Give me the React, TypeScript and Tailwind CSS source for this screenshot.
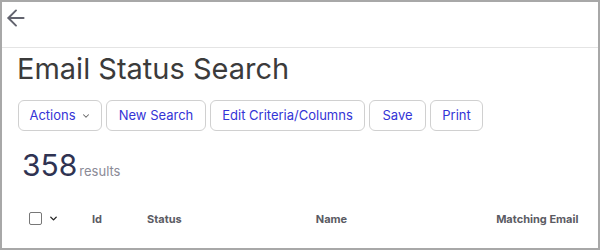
import { ArrowLeft, ChevronDown } from "lucide-react";

const buttons = [
  { label: "New Search", w: "w-[100px]" },
  { label: "Edit Criteria/Columns", w: "w-[155px]" },
  { label: "Save", w: "w-[57px]" },
  { label: "Print", w: "w-[53px]" },
];

export default function App() {
  return (
    <div className="w-[600px] h-[250px] border-2 border-[#a8a8a8] bg-white overflow-hidden font-['Inter',sans-serif]">
      {/* top bar */}
      <div className="h-[46px] border-b border-[#e4e4e4] flex items-start pl-[1px] pt-[3px]">
        <ArrowLeft className="w-[26px] h-[26px] text-[#62636e]" strokeWidth={1.8} />
      </div>

      <div className="pl-[15px] pr-4">
        <h1 className="text-[29px] leading-none text-[#3b3b3b] mt-[6px]">Email Status Search</h1>

        <div className="flex gap-[4px] mt-[17px]">
          <button className="h-[31px] w-[84px] ml-[1px] rounded-md border border-[#d0d0d0] text-[13px] text-[#3434d6] flex items-center justify-center gap-[5px]">
            Actions
            <ChevronDown className="w-[10px] h-[10px] text-[#666]" strokeWidth={2.5} />
          </button>
          {buttons.map((b) => (
            <button
              key={b.label}
              className={`${b.w} h-[31px] rounded-md border border-[#d0d0d0] text-[13px] text-[#3434d6]`}
            >
              {b.label}
            </button>
          ))}
        </div>

        <div className="flex items-baseline mt-[19px] ml-[5px]">
          <span className="text-[30px] leading-none text-[#2f3352]">358</span>
          <span className="text-[13px] text-[#8a8a96] ml-[2px]">results</span>
        </div>

        <div className="flex items-center mt-[29px] text-[11px] font-bold text-[#5b5b63]">
          <div className="w-[13px] h-[13px] ml-[12px] border border-[#777] rounded-[2px]" />
          <ChevronDown className="w-[11px] h-[11px] ml-[6px] text-[#222]" strokeWidth={3} />
          <span className="ml-[33px]">Id</span>
          <span className="ml-[45px]">Status</span>
          <span className="ml-[134px]">Name</span>
          <span className="ml-[149px]">Matching Email</span>
        </div>
      </div>
    </div>
  );
}
